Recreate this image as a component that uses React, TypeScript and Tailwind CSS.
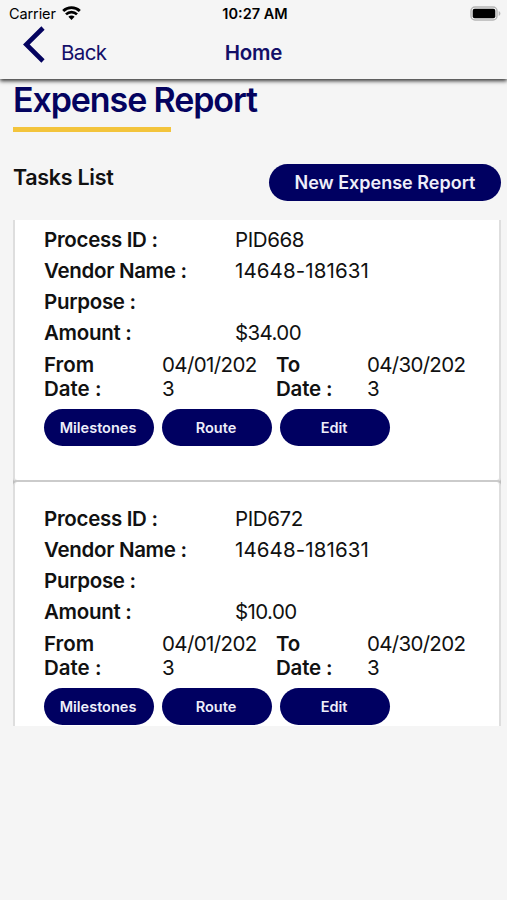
import { type ReactNode } from "react";

const tasks = [
  {
    processId: "PID668",
    vendorName: "14648-181631",
    purpose: "",
    amount: "$34.00",
    fromDate: "04/01/2023",
    toDate: "04/30/2023",
  },
  {
    processId: "PID672",
    vendorName: "14648-181631",
    purpose: "",
    amount: "$10.00",
    fromDate: "04/01/2023",
    toDate: "04/30/2023",
  },
];

type Task = (typeof tasks)[number];

function StatusBar() {
  return (
    <div className="grid h-7 grid-cols-3 items-center pr-[6px] pl-[9px] text-black">
      <div className="flex items-center gap-[6px]">
        <span className="text-[14.5px] tracking-[-0.1px]">Carrier</span>
        <svg className="-mt-[2px]" width="19" height="14" viewBox="0 0 19 14" fill="none">
          <path d="M1.2 5a12 12 0 0 1 16.6 0" stroke="#000" strokeWidth="2.9" />
          <path d="M4 8.4a7.8 7.8 0 0 1 11 0" stroke="#000" strokeWidth="2.7" />
          <path d="M6.4 10.8a4.4 4.4 0 0 1 6.2 0L9.5 14Z" fill="#000" />
        </svg>
      </div>
      <span className="text-center text-[14.5px] font-semibold">10:27 AM</span>
      <svg
        className="-mt-[2px] justify-self-end"
        width="31"
        height="15"
        viewBox="0 0 31 15"
        fill="none"
      >
        <rect x="1" y="1" width="26" height="13" rx="4" stroke="#b5b5b5" strokeWidth="1.5" />
        <rect x="2.7" y="2.7" width="22.6" height="9.6" rx="2" fill="#000" />
        <path d="M28.7 5v5c1-.5 1.7-1.4 1.7-2.5S29.7 5.5 28.7 5Z" fill="#b5b5b5" />
      </svg>
    </div>
  );
}

function NavBar() {
  return (
    <div className="grid h-[51px] grid-cols-3 text-[20.5px] text-[#130f68]">
      <button className="flex items-start pl-[22px]">
        <svg
          className="-mt-[2px]"
          width="24"
          height="37"
          viewBox="0 0 24 37"
          fill="none"
          stroke="#04035f"
          strokeWidth="4.6"
        >
          <path d="M21 2 4.3 18.5 21 35" />
        </svg>
        <span className="mt-[10px] ml-[15px] leading-[30px] tracking-[-0.6px]">
          Back
        </span>
      </button>
      <span className="mt-[10px] text-center leading-[30px] font-semibold tracking-[-0.2px]">
        Home
      </span>
    </div>
  );
}

function Row({
  label,
  children,
  className = "",
}: {
  label: string;
  children: ReactNode;
  className?: string;
}) {
  return (
    <div className="flex h-[31px] items-center">
      <span className="w-[191px] font-semibold tracking-[-0.3px]">{label}</span>
      <span className={className}>{children}</span>
    </div>
  );
}

function PillButton({ children }: { children: ReactNode }) {
  return (
    <button className="h-[37px] w-[110px] rounded-full bg-[#000061] pt-px pr-[2px] text-[14.5px] font-semibold text-[#eeeefa]">
      {children}
    </button>
  );
}

function TaskCard({ task }: { task: Task }) {
  return (
    <div className="h-[279px] shrink-0 rounded-[4px] border-x-2 border-b-2 border-x-[#dedede] border-b-[#cbcbcb] bg-white pt-[22px] pl-[29px] text-[20.5px] text-[#111]">
      <Row label="Process ID :" className="tracking-[-0.4px]">
        {task.processId}
      </Row>
      <Row label="Vendor Name :" className="tracking-[0.1px]">
        {task.vendorName}
      </Row>
      <Row label="Purpose :">{task.purpose}</Row>
      <Row label="Amount :" className="tracking-[-0.6px]">
        {task.amount}
      </Row>
      <div className="mt-1 flex leading-[24.4px]">
        <span className="w-[118px] pr-8 font-semibold">From Date :</span>
        <span className="w-[114px] pr-[14px] tracking-[-0.6px] break-all">
          {task.fromDate}
        </span>
        <span className="w-[91px] pr-5 font-semibold tracking-[-0.2px]">
          To Date :
        </span>
        <span className="w-[102px] tracking-[-0.7px] break-all">
          {task.toDate}
        </span>
      </div>
      <div className="mt-[7px] flex gap-2">
        <PillButton>Milestones</PillButton>
        <PillButton>Route</PillButton>
        <PillButton>Edit</PillButton>
      </div>
    </div>
  );
}

export default function App() {
  return (
    <div className="flex h-[900px] w-[507px] flex-col overflow-hidden bg-[#f5f5f5] font-['Inter','Liberation_Sans',sans-serif]">
      <header className="relative shrink-0 bg-[#f5f5f5] shadow-[0_2px_4px_rgba(0,0,0,0.8)]">
        <StatusBar />
        <NavBar />
      </header>

      <main className="flex flex-col pr-[6px] pl-[13px]">
        <h1 className="mt-[2px] text-[34px] leading-[38px] font-semibold tracking-[-1.1px] text-[#04035f]">
          Expense Report
        </h1>
        <div className="mt-2 h-[5px] w-[158px] bg-[#f3c43c]" />

        <div className="mt-8 flex h-[37px] items-start justify-between">
          <h2 className="text-[21.5px] leading-[27px] font-semibold tracking-[-0.3px] text-[#111]">
            Tasks List
          </h2>
          <button className="h-[37px] w-[232px] rounded-full bg-[#000061] text-[18px] font-semibold text-[#eeeefa]">
            New Expense Report
          </button>
        </div>

        <div className="mt-[19px] flex h-[506px] flex-col overflow-hidden">
          <div className="-mt-[17px] flex flex-col bg-[#bdbdbd]">
            {tasks.map((task) => (
              <TaskCard key={task.processId} task={task} />
            ))}
          </div>
        </div>
      </main>
    </div>
  );
}
